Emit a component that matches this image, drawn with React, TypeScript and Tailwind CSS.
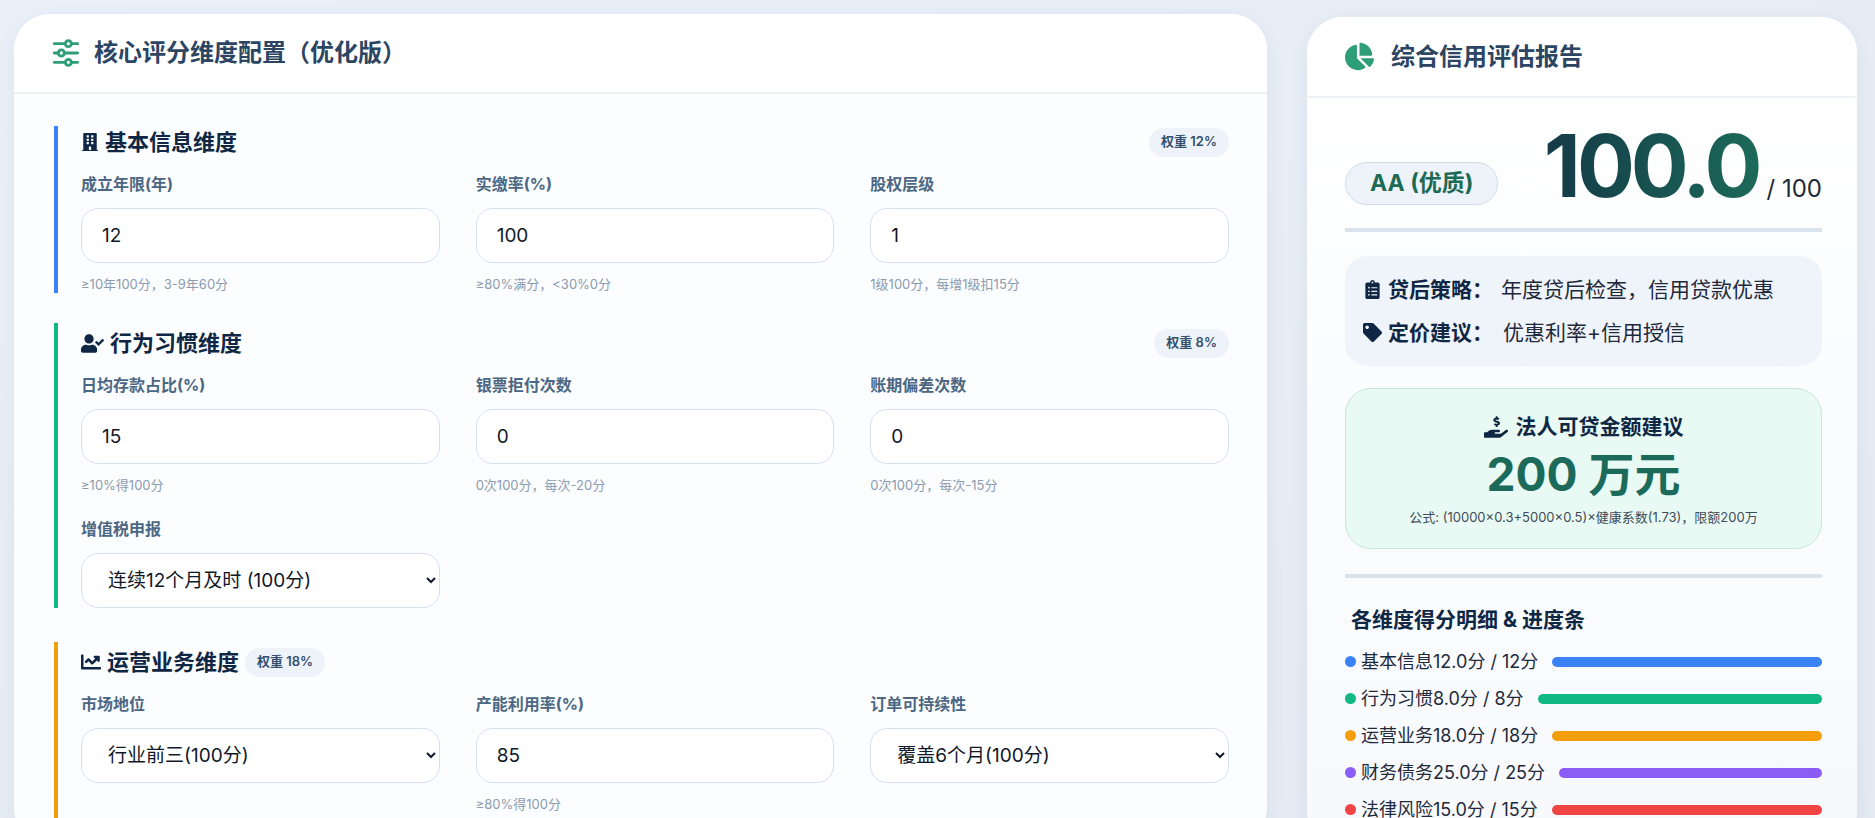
import React from "react";
import { FaBuilding, FaUserCheck, FaChartLine, FaChartPie, FaClipboardList, FaTag, FaHandHoldingUsd } from "react-icons/fa";

const font = { fontFamily: 'Inter, "Noto Sans CJK SC", sans-serif' };

function Field({ label, value, help, select }: { label: string; value: string; help?: string; select?: boolean }) {
  return (
    <div className="flex flex-col">
      <div className="text-[16px] font-bold text-[#4b6784] h-[22px] leading-[22px] mb-[13px]">{label}</div>
      {select ? (
        <select defaultValue={value} className="h-[55px] rounded-[17px] border border-[#d5e0ee] bg-white pl-[22px] pr-[10px] text-[19px] text-[#111827]" style={font}>
          <option>{value}</option>
        </select>
      ) : (
        <input defaultValue={value} className="h-[55px] rounded-[17px] border border-[#d5e0ee] bg-white px-[20px] text-[19px] text-[#111827] outline-none" style={font} />
      )}
      {help !== undefined && <div className="text-[13px] text-[#8b9bb0] mt-[12px] h-[18px] leading-[18px]">{help}</div>}
    </div>
  );
}

function Badge({ text }: { text: string }) {
  return <span className="inline-flex items-center h-[29px] px-[12px] rounded-full bg-[#eef2f9] text-[13px] font-semibold text-[#34506e]">{text}</span>;
}

export default function App() {
  const rows = [
    { c: "#3b82f6", t: "基本信息12.0分 / 12分" },
    { c: "#10b981", t: "行为习惯8.0分 / 8分" },
    { c: "#f59e0b", t: "运营业务18.0分 / 18分" },
    { c: "#8b5cf6", t: "财务债务25.0分 / 25分" },
    { c: "#ef4444", t: "法律风险15.0分 / 15分" },
  ];
  return (
    <div className="w-[1875px] h-[818px] overflow-hidden bg-gradient-to-br from-[#eaf0f8] to-[#e4eaf3] flex gap-[40px] pl-[14px] pr-[18px] pt-[14px]" style={font}>
      {/* Left */}
      <div className="w-[1253px] h-[830px] bg-[#fcfdfe] rounded-[36px] shadow-[0_4px_20px_rgba(30,50,90,0.06)] flex flex-col overflow-hidden">
        <div className="h-[80px] border-b-2 border-[#eef2f7] flex items-center pl-[38px] gap-[14px] bg-white">
          <svg width="28" height="28" viewBox="0 0 24 24" fill="none" stroke="#2e9e78" strokeWidth="2.4" strokeLinecap="round">
            <line x1="2" y1="4" x2="22" y2="4" />
            <line x1="2" y1="12" x2="22" y2="12" />
            <line x1="2" y1="20" x2="22" y2="20" />
            <circle cx="14" cy="4" r="2.6" fill="white" />
            <circle cx="8" cy="12" r="2.6" fill="white" />
            <circle cx="14" cy="20" r="2.6" fill="white" />
          </svg>
          <span className="text-[24px] font-bold text-[#2b4563]">核心评分维度配置（优化版）</span>
        </div>
        <div className="flex-1 pl-[40px] pr-[38px] pt-[32px] flex flex-col gap-[34px]">
          {/* Section 1 */}
          <div className="border-l-4 border-[#3b82f6] pl-[23px]">
            <div className="flex items-center justify-between h-[32px] mb-[15px]">
              <div className="flex items-center gap-[6px] text-[22px] font-bold text-[#0f2744]"><FaBuilding size={18} />基本信息维度</div>
              <Badge text="权重 12%" />
            </div>
            <div className="grid grid-cols-3 gap-[36px]">
              <Field label="成立年限(年)" value="12" help="≥10年100分，3-9年60分" />
              <Field label="实缴率(%)" value="100" help="≥80%满分，<30%0分" />
              <Field label="股权层级" value="1" help="1级100分，每增1级扣15分" />
            </div>
          </div>
          {/* Section 2 */}
          <div className="border-l-4 border-[#10b981] pl-[23px] -mt-[4px]">
            <div className="flex items-center justify-between h-[32px] mb-[15px] mt-[4px]">
              <div className="flex items-center gap-[6px] text-[22px] font-bold text-[#0f2744]"><FaUserCheck size={23} />行为习惯维度</div>
              <Badge text="权重 8%" />
            </div>
            <div className="grid grid-cols-3 gap-x-[36px] gap-y-[24px]">
              <Field label="日均存款占比(%)" value="15" help="≥10%得100分" />
              <Field label="银票拒付次数" value="0" help="0次100分，每次-20分" />
              <Field label="账期偏差次数" value="0" help="0次100分，每次-15分" />
              <Field label="增值税申报" value="连续12个月及时 (100分)" select />
            </div>
          </div>
          {/* Section 3 */}
          <div className="flex-1 border-l-4 border-[#f59e0b] pl-[23px] pt-[4px]">
            <div className="flex items-center gap-[6px] h-[32px] mb-[15px]">
              <div className="flex items-center gap-[6px] text-[22px] font-bold text-[#0f2744]"><FaChartLine size={20} />运营业务维度</div>
              <Badge text="权重 18%" />
            </div>
            <div className="grid grid-cols-3 gap-[36px]">
              <Field label="市场地位" value="行业前三(100分)" select />
              <Field label="产能利用率(%)" value="85" help="≥80%得100分" />
              <Field label="订单可持续性" value="覆盖6个月(100分)" select />
            </div>
          </div>
        </div>
      </div>
      {/* Right */}
      <div className="w-[550px] h-[830px] mt-[3px] bg-gradient-to-b from-white to-[#f7f9fc] rounded-[36px] shadow-[0_4px_20px_rgba(30,50,90,0.06)] flex flex-col overflow-hidden">
        <div className="h-[81px] border-b-2 border-[#eef2f7] flex items-center pl-[38px] gap-[17px] bg-white">
          <FaChartPie size={29} color="#2e9e78" />
          <span className="text-[24px] font-bold text-[#2b4563]">综合信用评估报告</span>
        </div>
        <div className="pl-[38px] pr-[35px] pt-[24px] flex flex-col">
          <div className="flex items-end justify-between h-[110px] pb-[19px] border-b-4 border-[#d9e3ee]">
            <span className="h-[43px] px-[24px] mb-[4px] rounded-full bg-[#eef3fa] border border-[#cfdbea] flex items-center text-[23px] font-bold text-[#1e6b55]">AA (优质)</span>
            <div className="flex items-baseline gap-[8px]">
              <span className="text-[86px] font-bold leading-none tracking-[-4px] bg-gradient-to-r from-[#143a46] to-[#1c6a5a] bg-clip-text text-transparent">100.0</span>
              <span className="text-[24px] text-[#1f2937]">/ 100</span>
            </div>
          </div>
          <div className="mt-[24px] h-[110px] rounded-[22px] bg-[#eff4fa] px-[18px] flex flex-col justify-center gap-[12px] text-[21px] text-[#1e293b]">
            <div className="flex items-center"><FaClipboardList size={19} className="text-[#0f2744] mr-[6px]" /><b className="text-[#0f2744]">贷后策略：</b><span className="ml-[8px]">年度贷后检查，信用贷款优惠</span></div>
            <div className="flex items-center"><FaTag size={19} className="text-[#0f2744] mr-[6px]" /><b className="text-[#0f2744]">定价建议：</b><span className="ml-[10px]">优惠利率+信用授信</span></div>
          </div>
          <div className="mt-[22px] h-[161px] rounded-[26px] bg-[#e8faf3] border border-[#c4e8d8] flex flex-col items-center pt-[22px]">
            <div className="flex items-center gap-[8px] text-[21px] font-bold text-[#0f2744]"><FaHandHoldingUsd size={24} />法人可贷金额建议</div>
            <div className="text-[46px] font-bold text-[#1c6a5a] leading-[58px] mt-[2px]">200 万元</div>
            <div className="text-[13px] text-[#3f4a5a] mt-[5px]">公式: (10000×0.3+5000×0.5)×健康系数(1.73)，限额200万</div>
          </div>
          <div className="mt-[25px] border-t-4 border-[#d9e3ee]" />
          <div className="mt-[26px] ml-[6px] text-[21px] font-bold text-[#0f2744]">各维度得分明细 &amp; 进度条</div>
          <div className="mt-[14px] flex flex-col gap-[13px]">
            {rows.map((r) => (
              <div key={r.t} className="flex items-center h-[24px]">
                <span className="w-[11px] h-[11px] rounded-full mr-[5px]" style={{ background: r.c }} />
                <span className="text-[18px] text-[#1e293b] whitespace-nowrap mr-[14px]">{r.t}</span>
                <div className="flex-1 h-[10px] rounded-full" style={{ background: r.c }} />
              </div>
            ))}
          </div>
        </div>
      </div>
    </div>
  );
}
